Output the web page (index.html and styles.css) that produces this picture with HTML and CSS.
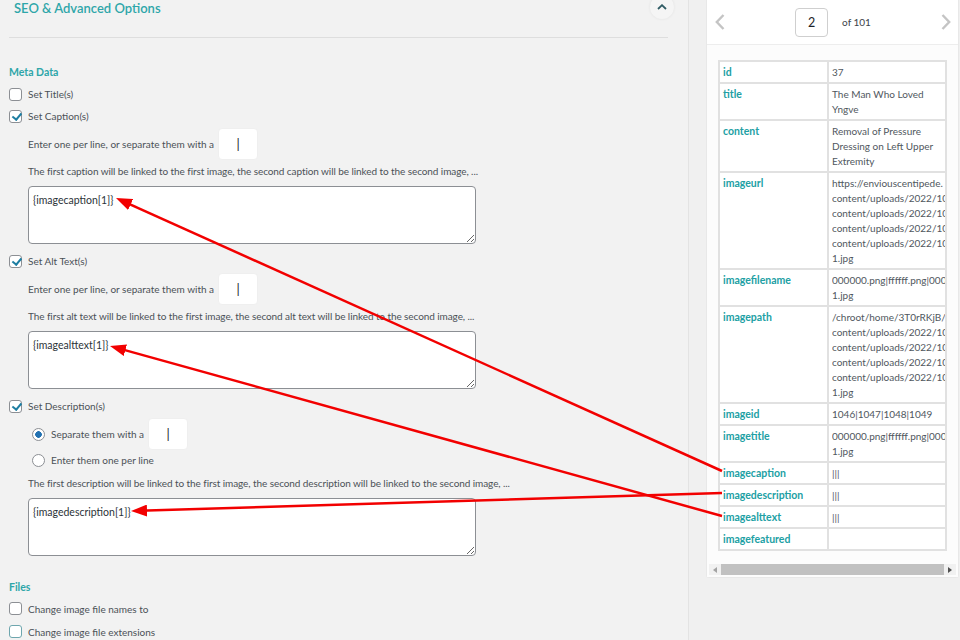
FILE: index.html
```html
<!DOCTYPE html>
<html>
<head>
    <title>SEO &amp; Advanced Options</title>
    <link rel="stylesheet" href="styles.css">
</head>
<body>
<div id="page">
    <div id="options">
        <div class="section-head">
            <h2>SEO &amp; Advanced Options</h2>
            <button class="collapse-btn">
                <svg width="10" height="6" viewBox="0 0 10 6"><polyline points="1,5 5,1.2 9,5" fill="none" stroke="#2f5b64" stroke-width="1.8"/></svg>
            </button>
        </div>

        <div class="group-title">Meta Data</div>
        <label class="check"><input type="checkbox" class="box">Set Title(s)</label>
        <label class="check"><input type="checkbox" class="box" checked>Set Caption(s)</label>
        <div class="indent">
            <div class="sep-row">Enter one per line, or separate them with a <span class="sep-input">|</span></div>
            <p class="hint">The first caption will be linked to the first image, the second caption will be linked to the second image, ...</p>
            <textarea readonly>{imagecaption[1]}</textarea>
        </div>

        <label class="check"><input type="checkbox" class="box" checked>Set Alt Text(s)</label>
        <div class="indent">
            <div class="sep-row">Enter one per line, or separate them with a <span class="sep-input">|</span></div>
            <p class="hint">The first alt text will be linked to the first image, the second alt text will be linked to the second image, ...</p>
            <textarea readonly>{imagealttext[1]}</textarea>
        </div>

        <label class="check"><input type="checkbox" class="box" checked>Set Description(s)</label>
        <div class="indent">
            <label class="radio-row first"><input type="radio" name="desc" class="dot" checked>Separate them with a <span class="sep-input">|</span></label>
            <label class="radio-row"><input type="radio" name="desc" class="dot">Enter them one per line</label>
            <p class="hint">The first description will be linked to the first image, the second description will be linked to the second image, ...</p>
            <textarea readonly>{imagedescription[1]}</textarea>
        </div>

        <div class="group-title files">Files</div>
        <label class="check tall"><input type="checkbox" class="box">Change image file names to</label>
        <label class="check tall"><input type="checkbox" class="box focus">Change image file extensions</label>
    </div>

    <div id="preview">
        <div class="card">
            <div class="pager">
                <svg class="chev" width="10" height="16" viewBox="0 0 10 16"><polyline points="8.5,1 1.8,8 8.5,15" fill="none" stroke="#c4c4c4" stroke-width="2.4"/></svg>
                <div class="page-num">
                    <span class="page-box">2</span>
                    <span class="page-of">of 101</span>
                </div>
                <svg class="chev" width="10" height="16" viewBox="0 0 10 16"><polyline points="1.5,1 8.2,8 1.5,15" fill="none" stroke="#c4c4c4" stroke-width="2.4"/></svg>
            </div>
            <div class="card-body">
                <table class="fields">
                    <colgroup><col class="key-col"><col class="val-col"></colgroup>
                    <tr><td class="key">id</td><td><div class="clip">37</div></td></tr>
                    <tr><td class="key">title</td><td><div class="wrap">The Man Who Loved Yngve</div></td></tr>
                    <tr><td class="key">content</td><td><div class="wrap">Removal of Pressure Dressing on Left Upper Extremity</div></td></tr>
                    <tr><td class="key">imageurl</td><td><div class="clip">https://enviouscentipede.<br>content/uploads/2022/10<br>content/uploads/2022/10<br>content/uploads/2022/10<br>content/uploads/2022/10<br>1.jpg</div></td></tr>
                    <tr><td class="key">imagefilename</td><td><div class="clip">000000.png|ffffff.png|000<br>1.jpg</div></td></tr>
                    <tr><td class="key">imagepath</td><td><div class="clip">/chroot/home/3T0rRKjB/e<br>content/uploads/2022/10<br>content/uploads/2022/10<br>content/uploads/2022/10<br>content/uploads/2022/10<br>1.jpg</div></td></tr>
                    <tr><td class="key">imageid</td><td><div class="clip">1046|1047|1048|1049</div></td></tr>
                    <tr><td class="key">imagetitle</td><td><div class="clip">000000.png|ffffff.png|000<br>1.jpg</div></td></tr>
                    <tr><td class="key">imagecaption</td><td><div class="clip">|||</div></td></tr>
                    <tr><td class="key">imagedescription</td><td><div class="clip">|||</div></td></tr>
                    <tr><td class="key">imagealttext</td><td><div class="clip">|||</div></td></tr>
                    <tr><td class="key">imagefeatured</td><td><div class="clip"></div></td></tr>
                </table>
                <div class="hscroll">
                    <span class="arrow left"></span>
                    <span class="thumb"></span>
                    <span class="arrow right"></span>
                </div>
            </div>
        </div>
    </div>

    <!-- annotation arrows drawn over the screenshot -->
    <svg class="arrows" width="960" height="640" viewBox="0 0 960 640">
        <defs>
            <marker id="head" markerUnits="userSpaceOnUse" markerWidth="16" markerHeight="12" refX="8" refY="6" orient="auto">
                <path d="M0,0 L16,6 L0,12 z" fill="#f20000"/>
            </marker>
        </defs>
        <line x1="722" y1="471" x2="123.3" y2="201.3" marker-end="url(#head)"/>
        <line x1="722" y1="493" x2="139" y2="510.8" marker-end="url(#head)"/>
        <line x1="722" y1="516" x2="117.7" y2="348.1" marker-end="url(#head)"/>
    </svg>
</div>
</body>
</html>
```

FILE: styles.css
```css
body {
    margin: 0;
    background-color: #f1f1f1;
    font-family: Lato, "Noto Sans", sans-serif;
    font-size: 10px;
    color: #4b5157;
}

#page {
    display: flex;
    width: 960px;
    height: 640px;
    overflow: hidden;
    position: relative;
}

/* left column */

#options {
    box-sizing: border-box;
    width: 689px;
    flex-shrink: 0;
    padding: 0 20px 0 9px;
    background-color: #f2f2f2;
    border-right: 1px solid #e3e3e3;
}

.section-head {
    display: flex;
    justify-content: space-between;
    align-items: flex-start;
    height: 37px;
    border-bottom: 1px solid #dedede;
}

.section-head h2 {
    margin: 0;
    padding-left: 5px;
    font-size: 13px;
    line-height: 16px;
    font-weight: 600;
    color: #2ea6a9;
}

.collapse-btn {
    width: 24px;
    height: 24px;
    margin: -5px -6px 0 0;
    padding: 0;
    border: none;
    border-radius: 50%;
    background-color: #f5f5f5;
    box-shadow: 0 0 3px rgba(0, 0, 0, 0.07);
    display: flex;
    align-items: center;
    justify-content: center;
}

.group-title {
    margin-top: 27px;
    margin-bottom: 3px;
    line-height: 15px;
    font-size: 10.5px;
    font-weight: 700;
    color: #2ea6a9;
}

.group-title.files {
    margin-top: 24px;
    margin-bottom: 2px;
}

.check {
    display: flex;
    align-items: center;
    gap: 6px;
    height: 22px;
}

.check.tall {
    height: 23px;
}

.box {
    appearance: none;
    position: relative;
    box-sizing: border-box;
    width: 13px;
    height: 13px;
    margin: 0;
    border: 1px solid #8c8f94;
    border-radius: 3px;
    background-color: #fff;
}

.box:checked::before {
    content: "";
    position: absolute;
    left: 3.5px;
    top: 0.5px;
    width: 3.5px;
    height: 7px;
    border: solid #1d7ea2;
    border-width: 0 2px 2px 0;
    transform: rotate(40deg);
}

.box.focus {
    border-color: #6ea6ae;
}

.indent {
    padding-left: 19px;
    margin-bottom: 6px;
}

.sep-row {
    display: flex;
    align-items: center;
    gap: 4px;
    height: 32px;
    margin-top: 1px;
}

.sep-input {
    box-sizing: border-box;
    width: 40px;
    height: 32px;
    border: 1px solid #efefef;
    border-radius: 4px;
    background-color: #fff;
    display: flex;
    align-items: center;
    justify-content: center;
    font-size: 13px;
    color: #1d2327;
}

.hint {
    margin: 4px 0 0;
    line-height: 15px;
    letter-spacing: -0.08px;
}

.radio-row + .hint {
    margin-top: 6px;
}

textarea {
    display: block;
    box-sizing: border-box;
    width: 448px;
    height: 58px;
    margin-top: 7px;
    padding: 6px 4px;
    border: 1px solid #8c8f94;
    border-radius: 4px;
    background-color: #fff;
    font-family: inherit;
    font-size: 10.5px;
    line-height: 15px;
    color: #2c3338;
    resize: vertical;
    outline: none;
}

.radio-row {
    display: flex;
    align-items: center;
    gap: 6px;
    padding-left: 4px;
    height: 20px;
}

.radio-row.first {
    height: 32px;
    margin-top: 1px;
}

.radio-row .sep-input {
    margin-left: -2px;
}

.dot {
    appearance: none;
    box-sizing: border-box;
    width: 13px;
    height: 13px;
    margin: 0;
    border: 1px solid #8c8f94;
    border-radius: 50%;
    background-color: #fff;
}

.dot:checked {
    background: radial-gradient(circle, #2271b1 0 3px, #fff 3.6px);
}

/* right column */

#preview {
    flex: 1;
    padding: 0 2px 0 18px;
    background-color: #f0f0f0;
}

.card {
    background-color: #fff;
    border: 1px solid #e8e8e8;
    border-top: none;
    border-radius: 0 0 3px 3px;
    margin-left: -1px;
}

.pager {
    display: flex;
    align-items: center;
    justify-content: space-between;
    height: 44px;
    padding: 0 7px 0 8px;
    border-bottom: 1px solid #ededed;
}

.page-num {
    display: flex;
    align-items: center;
    gap: 14px;
}

.page-box {
    box-sizing: border-box;
    width: 33px;
    height: 29px;
    border: 1px solid #cfcfcf;
    border-radius: 4px;
    display: flex;
    align-items: center;
    justify-content: center;
    font-size: 12.5px;
    color: #1d2327;
}

.page-of {
    white-space: nowrap;
    color: #3c434a;
}

.card-body {
    padding: 15px 11px 2px 11px;
    background-color: #fcfcfc;
}

.fields {
    table-layout: fixed;
    width: 227px;
    border-collapse: collapse;
    background-color: #fff;
}

.key-col {
    width: 109px;
}

.val-col {
    width: 118px;
}

.fields td {
    border: 2px solid #e1e1e1;
    padding: 3px 0 2px 3px;
    vertical-align: top;
    line-height: 15px;
    color: #50575e;
}

.fields td.key {
    font-size: 10.5px;
    font-weight: 700;
    color: #21a0a4;
}

.clip {
    overflow: hidden;
    white-space: nowrap;
}

.wrap {
    padding-right: 4px;
}

.hscroll {
    display: flex;
    align-items: center;
    height: 11px;
    margin: 13px -9px 0 -9px;
    background-color: #f1f1f1;
}

.thumb {
    flex: 1;
    height: 11px;
    background-color: #c1c1c1;
}

.arrow {
    width: 12px;
    height: 11px;
    display: flex;
    align-items: center;
    justify-content: center;
}

.arrow::before {
    content: "";
    border-top: 3.5px solid transparent;
    border-bottom: 3.5px solid transparent;
}

.arrow.left::before {
    border-right: 4px solid #a3a3a3;
}

.arrow.right::before {
    border-left: 4px solid #505050;
}

/* annotation overlay */

.arrows {
    position: absolute;
    top: 0;
    left: 0;
    pointer-events: none;
}

.arrows line {
    stroke: #f20000;
    stroke-width: 2.5;
}
```
